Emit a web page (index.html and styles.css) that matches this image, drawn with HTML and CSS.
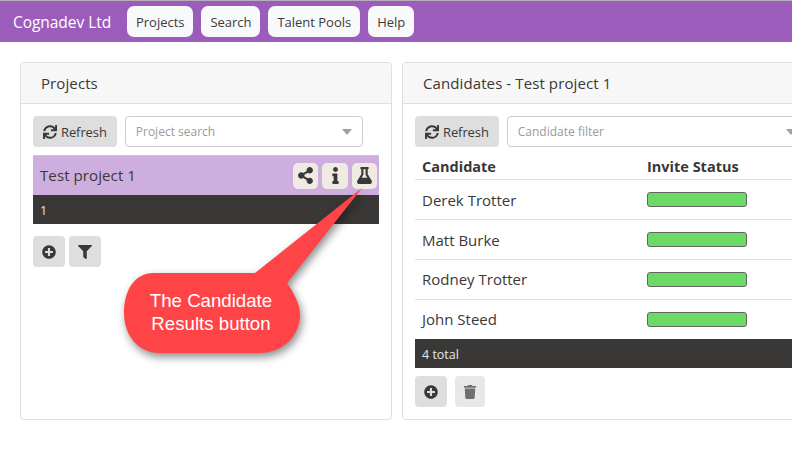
FILE: index.html
```html
<!DOCTYPE html>
<html lang="en">
<head>
<meta charset="utf-8">
<title>Cognadev Ltd</title>
<link rel="stylesheet" href="styles.css">
</head>
<body>
<svg class="defs" width="0" height="0" aria-hidden="true">
  <symbol id="i-sync" viewBox="0 0 512 512"><path d="M440.65 12.57l4 82.77A247.16 247.16 0 0 0 255.83 8C134.73 8 33.91 94.92 12.29 209.82A12 12 0 0 0 24.09 224h49.05a12 12 0 0 0 11.67-9.26 175.91 175.91 0 0 1 317-56.94l-101.46-4.86a12 12 0 0 0-12.57 12v47.41a12 12 0 0 0 12 12H500a12 12 0 0 0 12-12V12a12 12 0 0 0-12-12h-47.37a12 12 0 0 0-11.98 12.57zM255.83 432a175.61 175.61 0 0 1-146-77.8l101.8 4.87a12 12 0 0 0 12.57-12v-47.4a12 12 0 0 0-12-12H12a12 12 0 0 0-12 12V500a12 12 0 0 0 12 12h47.35a12 12 0 0 0 12-12.6l-4.15-82.57A247.17 247.17 0 0 0 255.83 504c121.11 0 221.93-86.92 243.55-201.82a12 12 0 0 0-11.8-14.18h-49.05a12 12 0 0 0-11.67 9.26A175.86 175.86 0 0 1 255.83 432z"/></symbol>
  <symbol id="i-plus" viewBox="0 0 512 512"><path d="M256 8C119 8 8 119 8 256s111 248 248 248 248-111 248-248S393 8 256 8zm144 276c0 6.6-5.4 12-12 12h-92v92c0 6.6-5.4 12-12 12h-56c-6.6 0-12-5.4-12-12v-92h-92c-6.6 0-12-5.4-12-12v-56c0-6.6 5.4-12 12-12h92v-92c0-6.6 5.4-12 12-12h56c6.6 0 12 5.4 12 12v92h92c6.6 0 12 5.4 12 12v56z"/></symbol>
  <symbol id="i-filter" viewBox="0 0 512 512"><path d="M487.976 0H24.028C2.71 0-8.047 25.866 7.058 40.971L192 225.941V432c0 7.831 3.821 15.17 10.237 19.662l80 55.98C298.02 518.69 320 507.493 320 487.98V225.941l184.947-184.97C520.021 25.896 509.338 0 487.976 0z"/></symbol>
  <symbol id="i-trash" viewBox="0 0 448 512"><path d="M432 32H312l-9.4-18.7A24 24 0 0 0 281.1 0H166.8a23.72 23.72 0 0 0-21.4 13.3L136 32H16A16 16 0 0 0 0 48v32a16 16 0 0 0 16 16h416a16 16 0 0 0 16-16V48a16 16 0 0 0-16-16zM53.2 467a48 48 0 0 0 47.9 45h245.8a48 48 0 0 0 47.9-45L416 128H32z"/></symbol>
  <symbol id="i-share" viewBox="0 0 448 512"><path d="M352 320c-22.608 0-43.387 7.819-59.79 20.895l-102.486-64.054a96.551 96.551 0 0 0 0-41.683l102.486-64.054C308.613 184.181 329.392 192 352 192c53.019 0 96-42.981 96-96S405.019 0 352 0s-96 42.981-96 96c0 7.158.79 14.13 2.276 20.841L155.79 180.895C139.387 167.819 118.608 160 96 160c-53.019 0-96 42.981-96 96s42.981 96 96 96c22.608 0 43.387-7.819 59.79-20.895l102.486 64.054A96.301 96.301 0 0 0 256 416c0 53.019 42.981 96 96 96s96-42.981 96-96-42.981-96-96-96z"/></symbol>
  <symbol id="i-info" viewBox="0 0 192 512"><path d="M20 424.229h20V279.771H20c-11.046 0-20-8.954-20-20V212c0-11.046 8.954-20 20-20h112c11.046 0 20 8.954 20 20v212.229h20c11.046 0 20 8.954 20 20V492c0 11.046-8.954 20-20 20H20c-11.046 0-20-8.954-20-20v-47.771c0-11.046 8.954-20 20-20zM96 0C56.235 0 24 32.235 24 72s32.235 72 72 72 72-32.235 72-72S135.764 0 96 0z"/></symbol>
  <symbol id="i-flask" viewBox="0 0 448 512"><path d="M437.2 403.5L320 215V64h8c13.3 0 24-10.7 24-24V24c0-13.3-10.7-24-24-24H120c-13.3 0-24 10.7-24 24v16c0 13.3 10.7 24 24 24h8v151L10.8 403.5C-18.5 450.6 15.3 512 70.9 512h306.2c55.7 0 89.4-61.5 60.1-108.5zM137.9 320l48.2-77.6c3.7-5.2 5.8-11.5 5.8-18.4V64h64v160c0 6.9 2.2 13.3 5.8 18.4l48.2 77.6h-172z"/></symbol>
</svg>

<nav class="navbar">
  <span class="brand">Cognadev Ltd</span>
  <a class="nav-btn">Projects</a>
  <a class="nav-btn">Search</a>
  <a class="nav-btn">Talent Pools</a>
  <a class="nav-btn">Help</a>
</nav>

<main class="main">
  <section class="card">
    <header class="card-head">Projects</header>
    <div class="card-body">
      <div class="toolbar">
        <button class="btn"><svg class="ico"><use href="#i-sync"/></svg>Refresh</button>
        <div class="select select-short"><span>Project search</span><i class="caret"></i></div>
      </div>
      <div class="project">
        <span class="project-name">Test project 1</span>
        <span class="mini"><svg class="ico"><use href="#i-share"/></svg></span>
        <span class="mini mini-wide"><svg class="ico"><use href="#i-info"/></svg></span>
        <span class="mini"><svg class="ico"><use href="#i-flask"/></svg></span>
      </div>
      <div class="darkbar">1</div>
      <div class="actions">
        <button class="btn square"><svg class="ico"><use href="#i-plus"/></svg></button>
        <button class="btn square"><svg class="ico"><use href="#i-filter"/></svg></button>
      </div>
    </div>
  </section>

  <section class="card card-wide">
    <header class="card-head">Candidates - Test project 1</header>
    <div class="card-body">
      <div class="toolbar">
        <button class="btn"><svg class="ico"><use href="#i-sync"/></svg>Refresh</button>
        <div class="select select-wide"><span>Candidate filter</span><i class="caret"></i></div>
      </div>
      <div class="row row-head"><span class="col-name">Candidate</span><span>Invite Status</span></div>
      <div class="row"><span class="col-name">Derek Trotter</span><i class="status"></i></div>
      <div class="row"><span class="col-name">Matt Burke</span><i class="status"></i></div>
      <div class="row row-up"><span class="col-name">Rodney Trotter</span><i class="status"></i></div>
      <div class="row row-up row-last"><span class="col-name">John Steed</span><i class="status"></i></div>
      <div class="darkbar">4 total</div>
      <div class="actions">
        <button class="btn square"><svg class="ico"><use href="#i-plus"/></svg></button>
        <button class="btn square disabled"><svg class="ico"><use href="#i-trash"/></svg></button>
      </div>
    </div>
  </section>
</main>

<div class="callout">
  <svg class="callout-shape" width="260" height="190" viewBox="0 0 260 190">
    <path d="M35 89H136L243 4L168 99C174 108 181 119 181 131C181 152 163 169 141 169H40C20 169 5 152 5 129C5 107 15 89 35 89Z"/>
  </svg>
  <p class="callout-text">The Candidate<br>Results button</p>
</div>
</body>
</html>
```

FILE: styles.css
```css
* { box-sizing: border-box; }
html, body { margin: 0; height: 100%; }
body {
  width: 792px;
  height: 459px;
  overflow: hidden;
  position: relative;
  background: #fff;
  font-family: "Open Sans", "Noto Sans", sans-serif;
  font-size: 15px;
  color: #3a3836;
  border-top: 1px solid #b5b0b8;
}
.defs { position: absolute; }
.ico { width: 14px; height: 14px; fill: currentColor; display: block; flex: none; }

.navbar {
  height: 41px;
  background: #9b5cbc;
  display: flex;
  align-items: center;
  padding: 0 0 0 13px;
  gap: 8px;
}
.brand { color: #fff; font-size: 15.5px; letter-spacing: -0.05px; margin-right: 8px; width: 98px; white-space: nowrap; }
.nav-btn {
  height: 31px;
  padding: 0 9px;
  background: #f8f9fa;
  border-radius: 7px;
  display: flex;
  align-items: center;
  font-size: 13px;
  letter-spacing: -0.02px;
  color: #3d3b3a;
  white-space: nowrap;
}

.main {
  display: flex;
  gap: 10px;
  padding: 20px 0 0 20px;
  width: 1000px;
}
.card {
  width: 372px;
  height: 358px;
  flex: none;
  border: 1px solid #dfdfdf;
  border-radius: 4px;
  background: #fff;
  display: flex;
  flex-direction: column;
}
.card-wide { width: 440px; }
.card-head {
  height: 41px;
  flex: none;
  background: #f7f7f7;
  border-bottom: 1px solid #dfdfdf;
  padding-left: 20px;
  display: flex;
  align-items: center;
  font-size: 15px;
  letter-spacing: 0.1px;
  border-radius: 4px 4px 0 0;
}
.card-body { padding: 12px 12px 0; }

.toolbar { display: flex; gap: 8px; height: 31px; }
.btn {
  border: 0;
  background: #dedede;
  border-radius: 4px;
  height: 31px;
  padding: 0 10px;
  font: 13px "Open Sans", "Noto Sans", sans-serif;
  letter-spacing: -0.1px;
  color: #3a3836;
  display: flex;
  align-items: center;
  gap: 4px;
}
.select {
  height: 31px;
  border: 1px solid #cccccc;
  border-radius: 4px;
  background: #fff;
  display: flex;
  align-items: center;
  justify-content: space-between;
  padding: 0 10px;
  font-size: 12px;
  color: #9a9a9a;
}
.select-short { width: 238px; }
.select-wide { width: 300px; flex: none; }
.caret {
  width: 0; height: 0;
  border-left: 5.5px solid transparent;
  border-right: 5.5px solid transparent;
  border-top: 6px solid #a0a0a0;
}

.project {
  margin-top: 8px;
  height: 40px;
  background: #ceaedf;
  display: flex;
  align-items: center;
  gap: 4px;
  padding: 0 2px 0 7px;
  border-top: 1px solid #c9c5cc;
}
.project-name { flex: 1; font-size: 15px; letter-spacing: 0.1px; margin-top: -2px; }
.mini {
  width: 25px;
  height: 26px;
  background: #efeae3;
  border-radius: 5px;
  display: flex;
  align-items: center;
  justify-content: center;
}
.mini-wide { width: 26px; }
.mini .ico { width: 17px; height: 17px; }
.darkbar {
  height: 29px;
  background: #3a3836;
  color: #e8e8e8;
  display: flex;
  align-items: center;
  padding: 1px 0 0 7px;
  font-size: 12.5px;
}
.actions { display: flex; gap: 4px; margin-top: 12px; }
.btn.square { width: 32px; padding: 0; justify-content: center; }
.btn.disabled { background: #e8e8e8; color: #6f6f6f; margin-left: 4px; width: 30px; }

.card-wide .darkbar { width: 378px; }
.card-wide .actions { margin-top: 8px; }

.row {
  display: flex;
  align-items: center;
  height: 40px;
  border-bottom: 1px solid #dfdfdf;
  padding-left: 7px;
  font-size: 15px;
  width: 378px;
}
.row-head { height: 33px; font-weight: 700; padding-top: 7px; font-size: 14.5px; }
.row-up .col-name { margin-top: -2px; }
.row-last { border-bottom: 0; height: 39px; }
.col-name { width: 225px; flex: none; }
.status {
  width: 100px;
  height: 15px;
  background: #6bdb65;
  border: 1px solid #666;
  border-radius: 3px;
}

.callout { position: absolute; left: 119px; top: 183px; width: 260px; height: 190px; }
.callout-shape {
  display: block;
  overflow: visible;
  fill: #ff4448;
  filter: drop-shadow(2px 4px 4px rgba(0, 0, 0, 0.45));
}
.callout-text {
  position: absolute;
  left: 5px;
  top: 105px;
  width: 174px;
  margin: 0;
  text-align: center;
  color: #fff;
  font: 18.67px/23px "Liberation Sans", Arial, sans-serif;
}
```
